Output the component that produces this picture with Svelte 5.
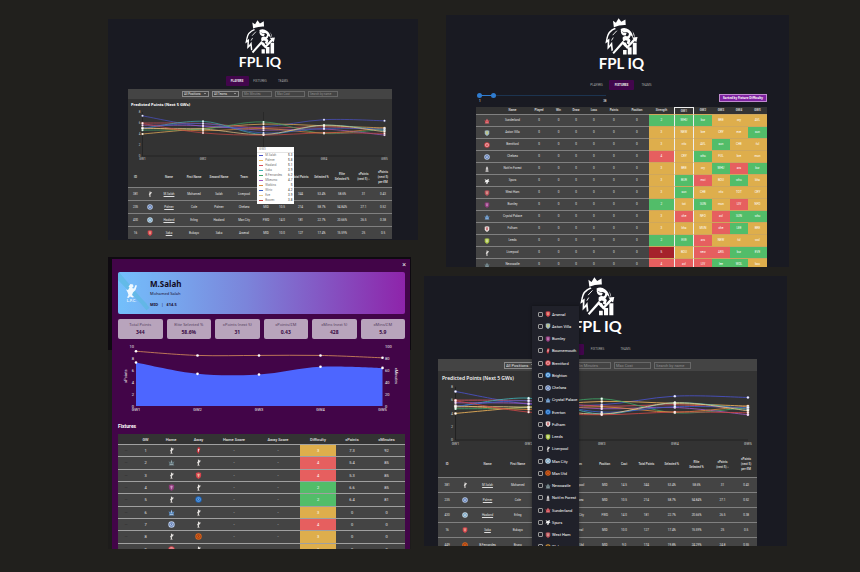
<script>
  const teams = {
    ARS: ['Arsenal', 'shield', '#d8434e', '#e9c6a0'],
    AVL: ['Aston Villa', 'shield', '#9fb9c4', '#d6cf5a'],
    BUR: ['Burnley', 'shield', '#8c3a78', '#d79fd0'],
    BOU: ['Bournemouth', 'bird', '#c8323c', '#f4dede'],
    BRE: ['Brentford', 'round', '#d2434a', '#f5dcdc'],
    BHA: ['Brighton', 'round', '#2f7fc8', '#e8f3ff'],
    CHE: ['Chelsea', 'round', '#b9cbe6', '#33539a'],
    CRY: ['Crystal Palace', 'eagle', '#5c8cc0', '#c2d3e8'],
    EVE: ['Everton', 'round', '#1c66bd', '#8cc0f2'],
    FUL: ['Fulham', 'shield', '#ece4e2', '#b8343c'],
    LEE: ['Leeds', 'shield', '#a9c443', '#e8eed0'],
    LIV: ['Liverpool', 'liver', '#e6e3e0', '#b8b4b0'],
    MCI: ['Man City', 'round', '#c9dcea', '#4d86ac'],
    MUN: ['Man Utd', 'round', '#d9661c', '#8a2a10'],
    NEW: ['Newcastle', 'eagle', '#64787e', '#a7b5b8'],
    NFO: ["Nott'm Forest", 'tree', '#d8d4d4', '#a8a4a4'],
    SUN: ['Sunderland', 'eagle', '#d24a52', '#e8b0b2'],
    TOT: ['Spurs', 'spurs', '#f4f4f4', '#cccccc'],
    WHU: ['West Ham', 'shield', '#b8505a', '#e6b8a8'],
    WOL: ['Wolves', 'round', '#d99a3c', '#3a2c18'],
  };

  const series = [
    { name: 'M.Salah', color: '#4a52c8', tip: '5.3', v: [7.3, 5.4, 5.3, 6.6, 6.4] },
    { name: 'Palmer', color: '#f0b45a', tip: '5.8', v: [4, 5, 5.8, 5.5, 5.1] },
    { name: 'Haaland', color: '#d8505e', tip: '5.1', v: [6, 5.9, 5.1, 5.3, 4.7] },
    { name: 'Saka', color: '#3fb0b4', tip: '3.9', v: [5, 6.3, 3.9, 5.6, 4.6] },
    { name: 'B.Fernandes', color: '#3fa566', tip: '6.2', v: [4.7, 4.9, 6.2, 4.1, 4.9] },
    { name: 'Mbeumo', color: '#a45ac4', tip: '4.7', v: [5.6, 5.5, 4.7, 4.9, 3.8] },
    { name: 'Watkins', color: '#e08a3c', tip: '5', v: [5.2, 4.6, 5, 4.2, 5.1] },
    { name: 'Wirtz', color: '#3d5ec8', tip: '4.2', v: [5.1, 5.9, 4.2, 5, 4.9] },
    { name: 'Eze', color: '#e6c88a', tip: '3.9', v: [5, 4.9, 3.9, 5.6, 4.4] },
    { name: 'Bowen', color: '#cc4646', tip: '3.8', v: [5.9, 4.2, 3.8, 4.2, 4.1] },
  ];

  const playerHead = ['ID', '', 'Name', 'First Name', 'Second Name', 'Team', 'Position', 'Cost', 'Total Points', 'Selected %', 'Elite Selected %', 'xPoints (next 5) ↓', 'xPoints (next 5) per £M'];
  const playerCols = [15, 14, 24, 26, 24, 26, 18, 14, 23, 19, 22, 21, 18];
  const players = [
    ['381', 'LIV', 'M.Salah', 'Mohamed', 'Salah', 'Liverpool', 'MID', '14.5', '344', '53.4%', '58.6%', '31', '0.43'],
    ['235', 'CHE', 'Palmer', 'Cole', 'Palmer', 'Chelsea', 'MID', '10.5', '214', '58.7%', '54.84%', '27.1', '0.52'],
    ['430', 'MCI', 'Haaland', 'Erling', 'Haaland', 'Man City', 'FWD', '14.0', '181', '22.7%', '20.66%', '26.5', '0.38'],
    ['16', 'ARS', 'Saka', 'Bukayo', 'Saka', 'Arsenal', 'MID', '10.0', '127', '17.4%', '15.59%', '25', '0.5'],
    ['449', 'MUN', 'B.Fernandes', 'Bruno', 'Fernandes', 'Man Utd', 'MID', '9.0', '174', '19.8%', '24.29%', '24.8', '0.55'],
  ];

  const fixHead = ['', 'Name', 'Played', 'Win', 'Draw', 'Loss', 'Points', 'Position', 'Strength', 'GW1', 'GW2', 'GW3', 'GW4', 'GW5'];
  const fixCols = [21, 31, 22, 17, 18, 18, 22, 24, 25, 20, 18, 18, 18, 19];
  const fixtures = [
    ['SUN', 2, 'WHU2 bur2 BRE3 cry3 AVL3'],
    ['AVL', 3, 'NEW3 bre3 CRY3 eve3 sun2'],
    ['BRE', 3, 'nfo3 AVL3 sun2 CHE3 ful3'],
    ['CHE', 4, 'CRY3 whu2 FUL3 bre3 mun3'],
    ['NFO', 3, 'BRE3 cry3 WHU2 ars4 bur2'],
    ['TOT', 3, 'BUR2 mci4 BOU3 whu2 bha3'],
    ['WHU', 3, 'sun2 CHE3 nfo3 TOT3 CRY3'],
    ['BUR', 2, 'tot3 SUN2 mun3 LIV4 NFO3'],
    ['CRY', 3, 'che4 NFO3 avl4 SUN2 whu2'],
    ['FUL', 3, 'bha3 MUN3 che4 LEE2 BRE3'],
    ['LEE', 2, 'EVE2 ars4 NEW3 ful3 wol3'],
    ['LIV', 5, 'BOU3 new4 ARS4 bur2 EVE2'],
    ['NEW', 4, 'avl4 LIV4 lee2 WOL2 bou3'],
  ].map(([t, s, f]) => ({ t, s, f: f.split(' ').map((x) => [x.slice(0, 3), x[3]]) }));

  const stats = [
    ['Total Points', '344'],
    ['Elite Selected %', '58.6%'],
    ['xPoints (next 5)', '31'],
    ['xPoints/£M', '0.43'],
    ['xMins (next 5)', '428'],
    ['xMins/£M', '5.9'],
  ];
  const gameHead = ['', 'GW', 'Home', 'Away', 'Home Score', 'Away Score', 'Difficulty', 'xPoints', 'xMinutes'];
  const gameCols = [16, 23, 28, 27, 44, 44, 36, 32, 37];
  const games = [
    ['LIV', 'BOU', 3, '7.3', '92'],
    ['NEW', 'LIV', 4, '5.4', '85'],
    ['LIV', 'ARS', 4, '5.3', '85'],
    ['BUR', 'LIV', 2, '6.6', '85'],
    ['LIV', 'EVE', 2, '6.4', '81'],
    ['CRY', 'LIV', 3, '0', '0'],
    ['CHE', 'LIV', 4, '0', '0'],
    ['LIV', 'MUN', 3, '0', '0'],
    ['BRE', 'LIV', 3, '0', '0'],
  ];

  const sum = (a) => a.reduce((x, y) => x + y, 0);
  const X = [14.5, 75, 135.5, 196, 256.5];
  const PX = [18, 79.5, 141, 202.5, 264.5];

  // Smooth curve through the points, tangents taken from the neighbours
  function curve(pts) {
    let d = `M${pts[0]}`;
    for (let i = 0; i < pts.length - 1; i++) {
      const a = pts[Math.max(i - 1, 0)];
      const b = pts[i];
      const c = pts[i + 1];
      const e = pts[Math.min(i + 2, pts.length - 1)];
      d += `C${b[0] + (c[0] - a[0]) / 6},${b[1] + (c[1] - a[1]) / 6} ${c[0] - (e[0] - b[0]) / 6},${c[1] - (e[1] - b[1]) / 6} ${c}`;
    }
    return d;
  }
  const line = (v) => curve(v.map((y, i) => [X[i], 48 - 5.5 * y]));
  const points = [7.3, 5.4, 5.3, 6.6, 6.4].map((y, i) => [PX[i], 64 - 5.95 * y]);
  const minutes = [92, 85, 85, 85, 81].map((y, i) => [PX[i], 64 - 0.595 * y]);
</script>

{#snippet crest(code)}
  {@const [name, kind, a, b] = teams[code]}
  <svg class="crest" viewBox="0 0 12 12" role="img" aria-label={name}>
    {#if kind === 'shield'}
      <path d="M1.5 1.5L6 .5l4.500 1v5Q10.500 10 6 11.800 1.500 10 1.500 6.500z" fill={a} />
      <path d="M3.500 4h5M6 3v6M4 6.500h4" stroke={b} stroke-width="1.200" fill="none" />
    {:else if kind === 'round'}
      <circle cx="6" cy="6" r="5.500" fill={a} />
      <circle cx="6" cy="6" r="3.300" fill="none" stroke={b} stroke-width="1" />
      <path d="M5 4l2 1-1 3z" fill={b} />
    {:else if kind === 'liver'}
      <path d="M5 1l2.500.5-.8 1.300L9 2l.8 1.500-2.300 2.500L6.500 8l1 3H4.500l.5-3-1.500-1.500L5.200 4z" fill={a} />
      <path d="M4 11.500h4" stroke={b} />
    {:else if kind === 'bird'}
      <path d="M5 .5l4 .5-.5 5L6 11.800 3 8z" fill={a} />
      <path d="M5 3l3 .5L6.500 6 7 9 5 7z" fill={b} />
    {:else if kind === 'eagle'}
      <path d="M1 4l3 1.500L6 1l2 4.500L11 4l-1.500 5 1.500 2H1l1.500-2z" fill={a} />
      <path d="M3 9.500h6M6 3v4" stroke={b} stroke-width="1.200" />
    {:else if kind === 'tree'}
      <path d="M6 .5l2 3-.5.500L9 6.500 7 7.500V9h2v2.500H3V9h2V7.500L3 6.500 4.500 4 4 3.500z" fill={a} />
      <path d="M4 10.200h4" stroke={b} />
    {:else}
      <path d="M1 2l4 2 2-1 3-1-1 3 2 2-3 1-1 3.500H4L5 8 1 9l2-3.500z" fill={a} />
    {/if}
  </svg>
{/snippet}

{#snippet brand()}
  <header class="brand">
    <svg viewBox="0 0 110 125" aria-hidden="true">
      <g fill="#fff">
        <path d="M30 31L27 9l10 7L46 1l9 12L69 5l1 19q-20-1-40 7z" />
        <path d="M33 33Q8 44 5 66l-4 20 8-5-1 26 12-12 2 17 5-3-3-29-10 14 1-25-7 5Q12 45 37 37z" />
        <path d="M53 37q14-8 28 3 12 9 14 26l-8-8q-3 12-9 12l-5-6q9-4 8-11-5-7-14-4l-9-3-3 6z" />
        <path d="M53 44l11 6 9 1-3 8q-9 2-14-5z" />
        <path d="M60 65q10-8 18 0l8 9-4 16-9-5 3-8-7-2-7 4q-4-6-2-14z" />
        <path d="M62 84l8-1 4 9-7 4q-6-4-5-12z" />
        <path d="M90 40q10 12 11 27l-4-8q-1-11-7-19z" />
        <path d="M61 108h12v15H61zM77 99h13v24H77zM94 84h13v39H94z" />
        <path d="M110 64l-4 18-5-4-26 27-15-16-30 33-5-5 35-40 16 16 20-22-5-5z" />
      </g>
      <path d="M40 43L26 58M28 66l-6 10" stroke="#fff" stroke-width="3" fill="none" />
    </svg>
    <h1>FPL IQ</h1>
  </header>
{/snippet}

{#snippet tabs(active)}
  <nav class="tabs">
    {#each ['PLAYERS', 'FIXTURES', 'TEAMS'] as t}
      <button type="button" class:active={t === active}>{t}</button>
    {/each}
  </nav>
{/snippet}

{#snippet cols(widths)}
  <colgroup>
    {#each widths as w}<col style="width:{(100 * w) / sum(widths)}%" />{/each}
  </colgroup>
{/snippet}

{#snippet playersPage(tip)}
  {@render brand()}
  {@render tabs('PLAYERS')}
  <section class="card">
    <div class="filters">
      <label class="pick"><select aria-label="Position"><option>All Positions</option></select></label>
      <label class="pick"><select aria-label="Team"><option>All Teams</option></select></label>
      <input aria-label="Min Minutes" placeholder="Min Minutes" />
      <input aria-label="Max Cost" placeholder="Max Cost" />
      <input aria-label="Search by name" placeholder="Search by name" />
    </div>
    <h2>Predicted Points (Next 5 GWs)</h2>
    <div class="chart">
      <svg viewBox="0 0 264 54" role="img" aria-label="Predicted points by gameweek">
        <path d="M14.500 4V48H256.500" stroke="#1c1c1c" stroke-width=".6" fill="none" />
        {#if tip}<path d="M135.500 4V48" stroke="#222" stroke-width=".6" />{/if}
        {#each [0, 2, 4, 6, 8] as n}
          <text x="12.500" y={49 - 5.5 * n} text-anchor="end">{n}</text>
        {/each}
        {#each X as x, i}<text {x} y="52" text-anchor="middle">GW{i + 1}</text>{/each}
        {#each series as s}<path d={line(s.v)} fill="none" stroke={s.color} stroke-width=".7" />{/each}
        {#each series as s}
          {#each s.v as v, i}
            <circle cx={X[i]} cy={48 - 5.5 * v} r="1" fill="#fff" stroke={s.color} stroke-width=".2" />
          {/each}
        {/each}
      </svg>
      {#if tip}
        <div class="tip">
          <strong>GW3</strong>
          <ul>
            {#each series as s}
              <li><i style="background:{s.color}"></i><span>{s.name}</span><b>{s.tip}</b></li>
            {/each}
          </ul>
        </div>
      {/if}
    </div>
    <table class="players">
      {@render cols(playerCols)}
      <thead><tr>{#each playerHead as h}<th>{h}</th>{/each}</tr></thead>
      <tbody>
        {#each tip ? players.slice(0, 4) : players as p}
          <tr>
            {#each p as c, i}
              <td>
                {#if i === 1}{@render crest(c)}{:else if i === 2}<a href="#player">{c}</a>{:else}{c}{/if}
              </td>
            {/each}
          </tr>
        {/each}
      </tbody>
    </table>
  </section>
{/snippet}

<main>
  <div class="column">
    <article class="window overview">{@render playersPage(true)}</article>

    <article class="window detail">
      <div class="sheet">
        <button type="button" class="close" aria-label="Close">×</button>
        <header class="banner">
          <svg class="stripe" viewBox="0 0 32 42" preserveAspectRatio="none" aria-hidden="true">
            <path d="M0 2L30 37M0 5L28 34" stroke="#58b9dc" stroke-width="4" />
          </svg>
          <svg class="badge" viewBox="0 0 26 40" role="img" aria-label="Liverpool">
            <path d="M11 2l5 1 1 4-3 3 4 1 3-7 3 1-3 9-5 5-2 5 4 4-3 1-5-2-3 3-3-1 3-5-2-6-3-5 4 1 3-5-2-2z" fill="#eef8ff" />
            <text x="13" y="38" text-anchor="middle">L.F.C.</text>
          </svg>
          <div>
            <h2>M.Salah</h2>
            <p>Mohamed Salah</p>
            <p class="meta"><b>MID</b><span>|</span><b>£14.5</b></p>
          </div>
        </header>
        <dl class="stats">
          {#each stats as [k, v]}
            <div><dt>{k}</dt><dd>{v}</dd></div>
          {/each}
        </dl>
        <svg class="form" viewBox="0 0 287 72" role="img" aria-label="xPoints and xMinutes by gameweek">
          <path d="{curve(points)}V64H18z" fill="#4d66ff" />
          <path d={curve(minutes)} fill="none" stroke="#d9915a" stroke-width=".8" />
          {#each [...points, ...minutes] as [x, y]}<circle cx={x} cy={y} r="1.300" fill="#fff" />{/each}
          {#each [0, 2, 4, 6, 8, 10] as n}
            <text x="16" y={65.5 - 5.95 * n} text-anchor="end">{n}</text>
            <text x="267" y={65.5 - 5.95 * n}>{n * 10}</text>
          {/each}
          {#each PX as x, i}<text {x} y="69" text-anchor="middle">GW{i + 1}</text>{/each}
          <text transform="translate(9 34) rotate(-90)" text-anchor="middle">xPoints</text>
          <text transform="translate(277 34) rotate(90)" text-anchor="middle">xMinutes</text>
        </svg>
        <h3>Fixtures</h3>
        <table class="games">
          {@render cols(gameCols)}
          <thead><tr>{#each gameHead as h}<th>{h}</th>{/each}</tr></thead>
          <tbody>
            {#each games as [h, a, d, xp, xm], i}
              <tr>
                <td class="dim">—</td>
                <td>{i + 1}</td>
                <td>{@render crest(h)}</td>
                <td>{@render crest(a)}</td>
                <td>-</td>
                <td>-</td>
                <td class="d{d}">{d}</td>
                <td>{xp}</td>
                <td>{xm}</td>
              </tr>
            {/each}
          </tbody>
        </table>
      </div>
    </article>
  </div>

  <div class="column">
    <article class="window schedule">
      {@render brand()}
      {@render tabs('FIXTURES')}
      <div class="tools">
        <div class="range">
          <div class="rail"><span></span></div>
          <input type="range" min="1" max="38" value="1" aria-label="First gameweek" />
          <input type="range" min="1" max="38" value="5" aria-label="Last gameweek" />
          <div class="ends"><span>1</span><span>38</span></div>
        </div>
        <button type="button" class="sort">Sorted by Fixture Difficulty</button>
      </div>
      <table class="fixtures">
        {@render cols(fixCols)}
        <thead><tr>{#each fixHead as h}<th class:now={h === 'GW1'}>{h}</th>{/each}</tr></thead>
        <tbody>
          {#each fixtures as r}
            <tr>
              <td>{@render crest(r.t)}</td>
              <td>{teams[r.t][0]}</td>
              {#each Array(6) as _}<td>0</td>{/each}
              <td class="d{r.s}">{r.s}</td>
              {#each r.f as [f, d], i}<td class="d{d}" class:now={i === 0}>{f}</td>{/each}
            </tr>
          {/each}
        </tbody>
      </table>
    </article>

    <article class="window picker">
      {@render playersPage(false)}
      <ul class="menu">
        {#each Object.entries(teams) as [code, t]}
          <li>
            <label><input type="checkbox" />{@render crest(code)}<span>{t[0]}</span></label>
          </li>
        {/each}
      </ul>
    </article>
  </div>
</main>

<style>
  :global(body) {
    background: #21201d;
  }
  main {
    display: grid;
    grid-template-columns: minmax(0, 310fr) minmax(0, 365fr);
    gap: 6px;
    padding: 15px 71px 23px 108px;
    min-height: 100vh;
    box-sizing: border-box;
    font: 3px/5px Roboto, 'Liberation Sans', sans-serif;
    color: #e0e0e0;
  }
  main :global(*) {
    box-sizing: border-box;
  }
  h1, h2, h3, p, ul, dl, dd {
    margin: 0;
    padding: 0;
  }
  ul {
    list-style: none;
  }
  button, input, select {
    font: inherit;
    color: inherit;
    margin: 0;
    padding: 0;
    border: 0;
    background: none;
  }
  .window {
    position: relative;
    overflow: hidden;
    background: #191a22;
  }
  .overview {
    height: 221px;
    margin: 4px 0 17px;
    padding: 1px 26px 0 20px;
  }
  .detail {
    height: 292px;
    margin-right: 7px;
    padding: 2px 1px 0 4px;
    background: linear-gradient(#0e0a10 93px, #1d1c1b 93px);
  }
  .schedule {
    height: 252px;
    margin: 0 0 9px 22px;
    padding: 3px 22px 0 30px;
  }
  .picker {
    height: 270px;
    margin-right: 2px;
    padding: 1px 30px 0 14px;
  }

  .brand {
    display: flex;
    flex-direction: column;
    align-items: center;
  }
  .brand svg {
    height: 34px;
  }
  .brand h1 {
    font: 700 14px/16px Lato, 'Open Sans', sans-serif;
    color: #fff;
  }
  .schedule .brand svg {
    height: 37px;
  }
  .schedule .brand h1 {
    font-size: 15px;
  }
  .picker .brand svg {
    height: 39px;
  }
  .picker .brand h1 {
    font-size: 16px;
    line-height: 19px;
  }
  .tabs {
    display: flex;
    justify-content: center;
    margin: 6px 0 3px;
  }
  .tabs button {
    width: 23px;
    height: 10px;
    border-radius: 1px;
    color: #aaa;
  }
  .tabs .active {
    background: #42064c;
    color: #eee;
    font-weight: 700;
  }
  .schedule .tabs {
    margin: 9px 0 0;
  }
  .schedule .tabs button {
    width: 25px;
  }
  .picker .tabs {
    margin: 9px 0 4px;
  }
  .picker .tabs button {
    width: 28px;
    height: 11px;
  }

  .card {
    background: #333;
  }
  .filters {
    display: flex;
    justify-content: center;
    align-items: center;
    gap: 3px;
    height: 10px;
    background: #444;
  }
  .filters select, .filters input {
    display: block;
    width: 30px;
    height: 6px;
    padding: 0 1px;
    border: 1px solid #686868;
    line-height: 4px;
    appearance: none;
  }
  .filters select {
    width: 27px;
    border-color: #8a8a8a;
  }
  .filters input::placeholder {
    color: #8c8c8c;
  }
  .pick {
    position: relative;
  }
  .pick::after {
    content: '';
    position: absolute;
    right: 3px;
    top: 2px;
    border: 1px solid transparent;
    border-top-color: #ddd;
  }
  .picker .filters {
    height: 12px;
    font-size: 4px;
  }
  .picker .filters input {
    width: 37px;
    height: 7px;
    line-height: 5px;
  }
  .picker .filters select {
    width: 32px;
    height: 7px;
    line-height: 5px;
  }
  .card h2 {
    padding: 2px 3px 0;
    font: 700 4px/7px 'Noto Sans', sans-serif;
    color: #fff;
  }
  .picker .card h2 {
    padding: 3px 4px 0;
    font: 600 5px/8px 'Open Sans', sans-serif;
  }
  .chart {
    position: relative;
  }
  .chart svg {
    display: block;
    width: 100%;
  }
  .chart text {
    font-size: 3px;
    fill: #ccc;
  }
  .tip {
    position: absolute;
    z-index: 1;
    left: 49%;
    top: 39px;
    width: 37px;
    padding-bottom: 1px;
    background: #fff;
    color: #777;
  }
  .tip strong {
    display: block;
    padding: 0 2px;
    border-bottom: 1px solid #e4e4e4;
    font-weight: 400;
  }
  .tip li {
    display: flex;
    align-items: center;
    gap: 2px;
    height: 5px;
    padding: 0 2px;
  }
  .tip i {
    width: 4px;
    height: 1px;
  }
  .tip b {
    margin-left: auto;
    color: #555;
    font-weight: 500;
  }

  table {
    width: 100%;
    table-layout: fixed;
    border-collapse: separate;
    border-spacing: 0;
  }
  th, td {
    padding: 0;
    text-align: center;
    vertical-align: middle;
    white-space: nowrap;
  }
  th {
    background: #333;
    font-weight: 500;
  }
  td {
    height: 12px;
    background: #444;
    border-top: 1px solid #808080;
  }
  td a {
    color: inherit;
  }
  .players th {
    height: 25px;
    padding: 5px 2px 0;
    white-space: normal;
  }
  .players th:nth-child(n + 4):nth-child(-n + 10) {
    padding-inline: 0;
    white-space: nowrap;
  }
  .players td {
    height: 13px;
  }
  .picker .players th {
    height: 30px;
  }
  .picker .players th:nth-child(n + 11) {
    padding-inline: 5px;
  }
  .picker .players td {
    height: 15px;
  }
  .crest {
    display: block;
    width: 6px;
    height: 6px;
    margin: 0 auto;
  }
  .d2, .d3, .d4, .d5 {
    color: #fff;
  }
  .d2 {
    background: #52bd69;
  }
  .d3 {
    background: #deae4c;
  }
  .d4 {
    background: #e65f5f;
  }
  .d5 {
    background: #a5222b;
  }
  .fixtures th {
    height: 7px;
  }
  .fixtures .now {
    border-right: 1px solid #eee;
    border-left: 1px solid #eee;
  }
  .fixtures th.now {
    border-top: 1px solid #eee;
  }
  .fixtures td[class^='d'] {
    border-top-color: #cfa75c;
  }

  .tools {
    display: flex;
    justify-content: space-between;
    align-items: flex-start;
    height: 17px;
    padding-left: 1px;
  }
  .range {
    position: relative;
    width: 45%;
    height: 15px;
    padding-top: 5px;
  }
  .rail {
    height: 1px;
    margin: 0 2px;
    background: #1c3450;
  }
  .rail span {
    display: block;
    width: 11%;
    height: 1px;
    background: #2f7cd0;
  }
  .range input {
    position: absolute;
    top: 3px;
    left: 0;
    width: 100%;
    height: 5px;
    appearance: none;
    pointer-events: none;
  }
  .range input::-webkit-slider-thumb {
    appearance: none;
    width: 5px;
    height: 5px;
    border-radius: 50%;
    background: #2f7cd0;
    pointer-events: auto;
  }
  .ends {
    display: flex;
    justify-content: space-between;
    padding: 3px 1px 0 2px;
    color: #fff;
  }
  .sort {
    width: 48px;
    height: 8px;
    margin-top: 4px;
    border: 1px solid #c08ad0;
    background: #7e22a0;
    color: #fff;
    white-space: nowrap;
    font: 700 3px/6px 'Noto Sans', sans-serif;
  }

  .sheet {
    height: 100%;
    padding: 2px 5px 0 6px;
    background: #420548;
    overflow: hidden;
  }
  .close {
    display: block;
    width: 6px;
    height: 8px;
    margin: 0 -2px 3px auto;
    font-size: 7px;
    line-height: 8px;
  }
  .banner {
    position: relative;
    display: flex;
    align-items: center;
    gap: 12px;
    height: 42px;
    padding-left: 7px;
    border-radius: 2px;
    overflow: hidden;
    background: linear-gradient(90deg, #74c0fc, #7b84da 45%, #8e24aa);
    color: #1b1030;
    font: 4px/9px 'Noto Sans', sans-serif;
  }
  .stripe {
    position: absolute;
    left: 0;
    top: 0;
    height: 42px;
    opacity: 0.6;
  }
  .badge {
    position: relative;
    width: 13px;
    height: 20px;
  }
  .badge text {
    font: 700 7px 'Liberation Sans', sans-serif;
    fill: #eef8ff;
  }
  .banner h2 {
    padding-top: 2px;
    font: 700 8px/10px 'Noto Sans', sans-serif;
    color: #120a1c;
  }
  .meta {
    display: flex;
    gap: 3px;
    padding-top: 2px;
  }
  .stats {
    display: grid;
    grid-template-columns: repeat(6, minmax(0, 1fr));
    gap: 4px;
    margin: 5px 0 3px;
  }
  .stats div {
    height: 20px;
    padding-top: 3px;
    border-radius: 2px;
    background: #b8a4bc;
    text-align: center;
    font: 4px/6px 'Noto Sans', sans-serif;
    color: #54405c;
    white-space: nowrap;
  }
  .stats dd {
    font-size: 5px;
    line-height: 8px;
    font-weight: 700;
    color: #3a0a44;
  }
  .form {
    display: block;
    width: 100%;
  }
  .form text {
    font-size: 4px;
    fill: #eee;
  }
  .sheet h3 {
    margin: 6px 0 2px;
    font: 700 5px/12px Roboto, sans-serif;
    color: #fff;
  }
  .games {
    height: 121px;
  }
  .games th {
    height: 10px;
  }
  .games th, .games td {
    font-size: 4px;
  }
  .games td {
    border-color: #a0a0a0;
  }
  .games .crest {
    width: 7px;
    height: 7px;
  }
  .games .dim {
    color: #222;
  }

  .menu {
    position: absolute;
    z-index: 2;
    left: 108px;
    top: 30px;
    display: flex;
    flex-direction: column;
    width: 47px;
    height: 247px;
    padding-top: 2px;
    background: #20212a;
    box-shadow: 0 0 3px #0006;
    color: #fff;
    font-size: 4px;
  }
  .menu li {
    flex: 1;
  }
  .menu label {
    display: flex;
    align-items: center;
    height: 100%;
    padding-left: 6px;
    white-space: nowrap;
  }
  .menu input {
    width: 5px;
    height: 5px;
    border: 1px solid #999;
    border-radius: 1px;
    appearance: none;
  }
  .menu .crest {
    margin: 0 1px 0 2px;
  }
</style>
